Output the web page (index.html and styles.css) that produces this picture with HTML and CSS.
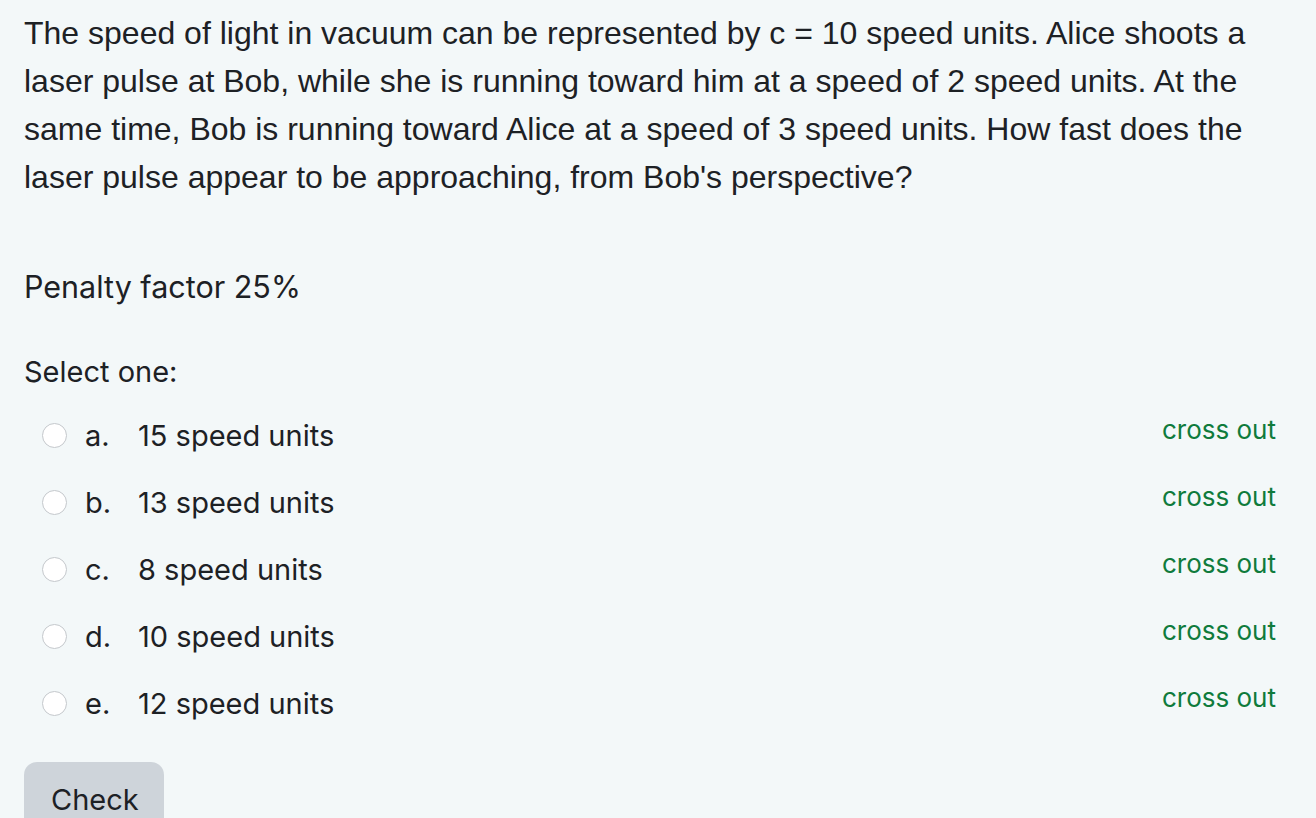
FILE: index.html
```html
<!DOCTYPE html>
<html lang="en">
<head>
<meta charset="utf-8">
<title>Question</title>
<link rel="stylesheet" href="styles.css">
</head>
<body>
<div class="que">
  <p class="qtext">The speed of light in vacuum can be represented by c = 10 speed units. Alice shoots a laser pulse at Bob, while she is running toward him at a speed of 2 speed units. At the same time, Bob is running toward Alice at a speed of 3 speed units. How fast does the laser pulse appear to be approaching, from Bob's perspective?</p>
  <p class="penalty">Penalty factor 25%</p>
  <p class="prompt">Select one:</p>
  <div class="answers">
    <div class="opt"><span class="radio"></span><span class="letter">a.</span><span class="label">15 speed units</span><a class="cross" href="#">cross out</a></div>
    <div class="opt"><span class="radio"></span><span class="letter">b.</span><span class="label">13 speed units</span><a class="cross" href="#">cross out</a></div>
    <div class="opt"><span class="radio"></span><span class="letter">c.</span><span class="label">8 speed units</span><a class="cross" href="#">cross out</a></div>
    <div class="opt"><span class="radio"></span><span class="letter">d.</span><span class="label">10 speed units</span><a class="cross" href="#">cross out</a></div>
    <div class="opt"><span class="radio"></span><span class="letter">e.</span><span class="label">12 speed units</span><a class="cross" href="#">cross out</a></div>
  </div>
  <button class="check">Check</button>
</div>
</body>
</html>
```
FILE: styles.css
```css
html, body {
  margin: 0;
  background: #f3f8f9;
  color: #1d2125;
}
body {
  overflow: hidden;
  height: 818px;
}
.que {
  padding: 9px 40px 0 24px;
  font-family: "Inter", "Liberation Sans", sans-serif;
}
.qtext {
  margin: 0;
  font-family: "Liberation Sans", Arial, sans-serif;
  font-size: 32px;
  line-height: 48px;
}
.penalty {
  margin: 63px 0 0;
  font-size: 30.5px;
  line-height: 45px;
}
.prompt {
  margin: 40px 0 0;
  font-size: 29px;
  line-height: 45px;
}
.answers {
  margin-top: 8px;
}
.opt {
  display: flex;
  align-items: center;
  height: 67px;
  font-size: 29px;
}
.radio {
  width: 23px;
  height: 23px;
  border: 1px solid #c4c8cc;
  border-radius: 50%;
  background: #fff;
  margin-left: 18px;
  margin-right: 18px;
  flex: none;
}
.letter {
  width: 53px;
}
.label {
  flex: 1;
}
.cross {
  color: #0f7b3c;
  text-decoration: none;
  font-size: 26px;
  align-self: flex-start;
  margin-top: 12px;
}
.check {
  margin-top: 25px;
  font-family: "Inter", "Liberation Sans", sans-serif;
  font-size: 29px;
  color: #1d2125;
  background: #ced4da;
  border: none;
  border-radius: 13px;
  padding: 18px 25px 18px 27px;
  line-height: 40px;
}
```
